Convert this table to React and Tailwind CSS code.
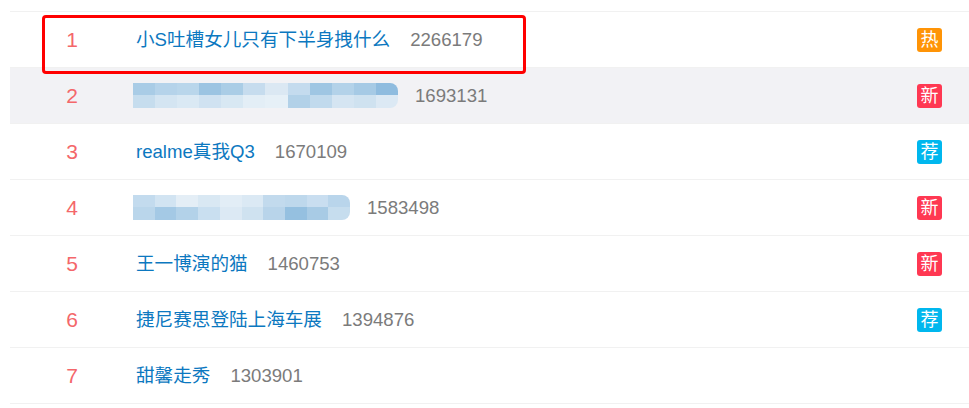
import React from 'react';

const FONT = { fontFamily: '"Liberation Sans", "Noto Sans CJK SC", sans-serif' };

const BADGES = {
  hot: { label: '热', cls: 'bg-[#ff9406]' },
  new: { label: '新', cls: 'bg-[#ff3852]' },
  rec: { label: '荐', cls: 'bg-[#00b7ee]' },
};

const ROWS = [
  { rank: 1, title: '小S吐槽女儿只有下半身拽什么', count: '2266179', badge: 'hot' },
  { rank: 2, blur: 'a', count: '1693131', badge: 'new', active: true },
  { rank: 3, title: 'realme真我Q3', count: '1670109', badge: 'rec' },
  { rank: 4, blur: 'b', count: '1583498', badge: 'new' },
  { rank: 5, title: '王一博演的猫', count: '1460753', badge: 'new' },
  { rank: 6, title: '捷尼赛思登陆上海车展', count: '1394876', badge: 'rec' },
  { rank: 7, title: '甜馨走秀', count: '1303901' },
];

// mosaic tones for the censored titles
const BLUR = {
  a: {
    top: ['bg-[#a9cce6]', 'bg-[#b5d3ea]', 'bg-[#b9d6eb]', 'bg-[#9cc4e2]', 'bg-[#aacde6]', 'bg-[#c6dcee]', 'bg-[#dbe8f3]', 'bg-[#c4dbee]', 'bg-[#9fc6e3]', 'bg-[#b3d2e9]', 'bg-[#a6cae5]', 'bg-[#8fbcdf]'],
    bottom: ['bg-[#c6ddee]', 'bg-[#d4e5f2]', 'bg-[#dae9f4]', 'bg-[#d0e2f1]', 'bg-[#d8e8f3]', 'bg-[#e3eef6]', 'bg-[#e6f0f7]', 'bg-[#b2d1e8]', 'bg-[#c1daed]', 'bg-[#d5e5f2]', 'bg-[#cfe2f0]', 'bg-[#dce9f4]'],
    w: 'w-[265px]',
  },
  b: {
    top: ['bg-[#c3dbee]', 'bg-[#d2e4f2]', 'bg-[#e4eef6]', 'bg-[#d9e8f3]', 'bg-[#e2edf6]', 'bg-[#dbe9f4]', 'bg-[#c2daed]', 'bg-[#bed8ec]', 'bg-[#c9def0]', 'bg-[#b9d5eb]'],
    bottom: ['bg-[#bad6eb]', 'bg-[#a4c9e5]', 'bg-[#b3d2e9]', 'bg-[#c9dff0]', 'bg-[#dce9f4]', 'bg-[#cfe2f0]', 'bg-[#b8d4ea]', 'bg-[#95c0e0]', 'bg-[#a8cbe5]', 'bg-[#c6ddee]'],
    w: 'w-[217px]',
  },
};

const Mosaic = ({ id }) => {
  const m = BLUR[id];
  return (
    <div className={`${m.w} -ml-[3px] h-[25px] flex flex-col rounded-r-[8px] overflow-hidden`}>
      <div className="flex flex-1">
        {m.top.map((c, i) => <div key={i} className={`flex-1 ${c}`} />)}
      </div>
      <div className="flex flex-1">
        {m.bottom.map((c, i) => <div key={i} className={`flex-1 ${c}`} />)}
      </div>
    </div>
  );
};

const App = () => {
  return (
    <div className="relative w-[969px] h-[408px] bg-white overflow-hidden pt-[11px] pl-[10px]" style={FONT}>
      <div className="border-t border-[#f1f1f1]">
        {ROWS.map(row => (
          <div key={row.rank}
            className={`h-[56px] flex items-center border-b border-[#f1f1f1] pr-[27px] ${row.active ? 'bg-[#f2f2f5]' : ''}`}>
            <div className="w-[124px] text-center text-[21px] text-[#f4676a]">{row.rank}</div>
            <div className="ml-[2px] flex items-center">
              {row.blur ? <Mosaic id={row.blur} /> : (
                <span className="text-[18.6px] text-[#0c78c0]">{row.title}</span>
              )}
              <span className={`${row.blur ? 'ml-[17px]' : 'ml-[20px]'} text-[18.6px] text-[#7b7b7b]`}>{row.count}</span>
            </div>
            <div className="flex-1" />
            {row.badge && (
              <span className={`w-[25px] h-[24px] rounded-[3px] flex items-center justify-center text-white text-[18px] leading-none ${BADGES[row.badge].cls}`}>
                {BADGES[row.badge].label}
              </span>
            )}
          </div>
        ))}
      </div>

      {/* annotation box over first entry */}
      <div className="absolute left-[42px] top-[15px] w-[484px] h-[59px] border-[3px] border-[#ff0000] rounded-[4px]" />
    </div>
  );
};

export default App;
